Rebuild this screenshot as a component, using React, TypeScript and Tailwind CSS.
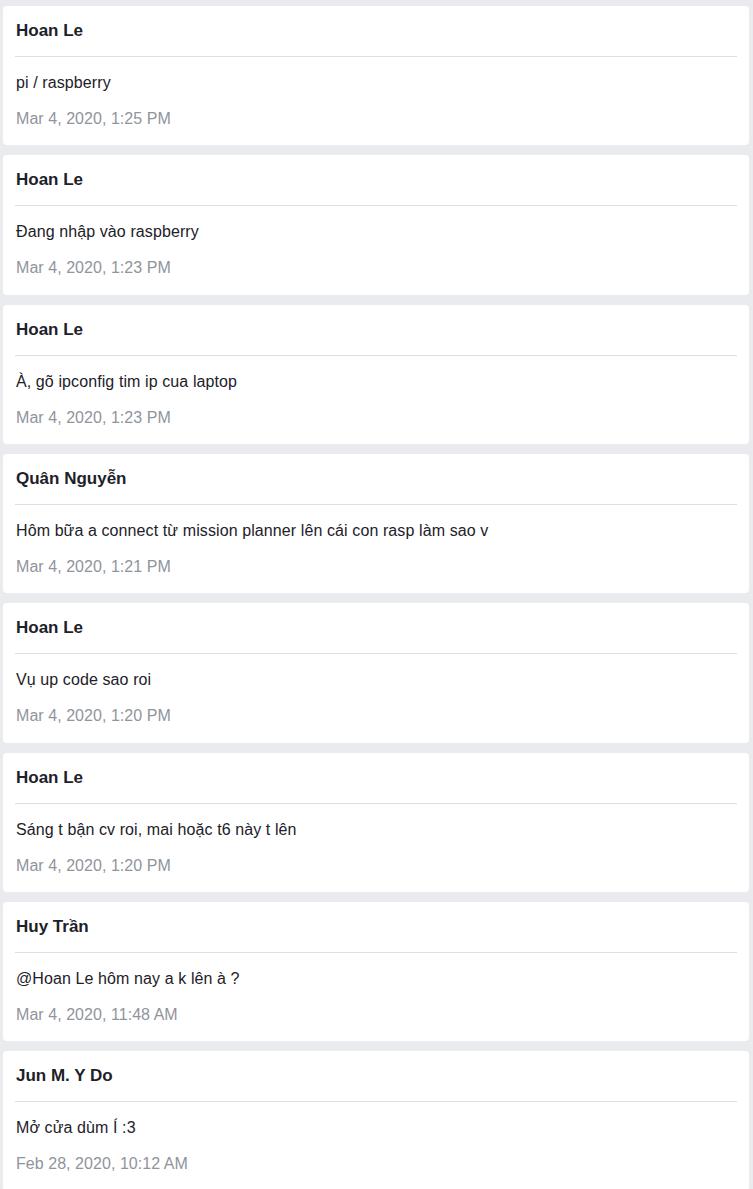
const messages = [
  { name: 'Hoan Le', text: 'pi / raspberry', time: 'Mar 4, 2020, 1:25 PM' },
  { name: 'Hoan Le', text: 'Đang nhập vào raspberry', time: 'Mar 4, 2020, 1:23 PM' },
  { name: 'Hoan Le', text: 'À, gõ ipconfig tim ip cua laptop', time: 'Mar 4, 2020, 1:23 PM' },
  {
    name: 'Quân Nguyễn',
    text: 'Hôm bữa a connect từ mission planner lên cái con rasp làm sao v',
    time: 'Mar 4, 2020, 1:21 PM',
  },
  { name: 'Hoan Le', text: 'Vụ up code sao roi', time: 'Mar 4, 2020, 1:20 PM' },
  { name: 'Hoan Le', text: 'Sáng t bận cv roi, mai hoặc t6 này t lên', time: 'Mar 4, 2020, 1:20 PM' },
  { name: 'Huy Trần', text: '@Hoan Le hôm nay a k lên à ?', time: 'Mar 4, 2020, 11:48 AM' },
  { name: 'Jun M. Y Do', text: 'Mở cửa dùm Í :3', time: 'Feb 28, 2020, 10:12 AM' },
];

const MessageCard = ({ name, text, time }: { name: string; text: string; time: string }) => (
  <div className="h-[139.33px] shrink-0 rounded-[4px] bg-white px-3 pt-[15px]">
    <div className="pl-px text-[17px] font-bold leading-5 text-[#1d2129]">{name}</div>
    <div className="mt-[15px] h-px bg-[#dddfe2]" />
    <p className="mt-4 pl-px text-[16px] leading-5 tracking-[0.1px] text-[#1d2129]">{text}</p>
    <p className="mt-4 pl-px text-[16px] leading-5 tracking-[0.05px] text-[#90949c]">{time}</p>
  </div>
);

export default function App() {
  return (
    <div
      className="min-h-screen bg-[#e9ebee] pl-[3px] pr-[4px] pt-[6px] pb-4"
      style={{ fontFamily: '"Liberation Sans", Arial, "Noto Sans", sans-serif' }}
    >
      <div className="flex flex-col gap-[10px]">
        {messages.map((m, i) => (
          <MessageCard key={i} {...m} />
        ))}
      </div>
    </div>
  );
}
